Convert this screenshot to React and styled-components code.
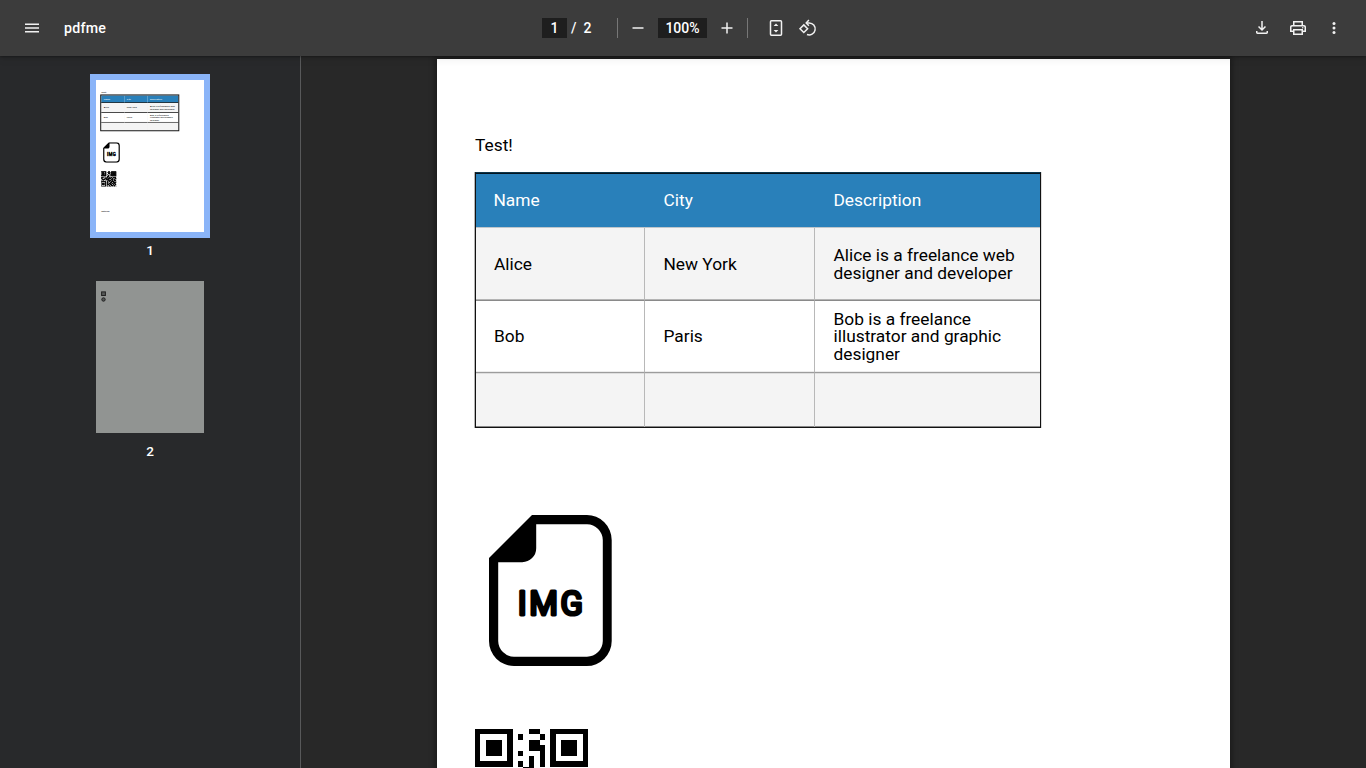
import React from "react";
import styled, { createGlobalStyle, css } from "styled-components";

const GlobalStyle = createGlobalStyle`
  * { box-sizing: border-box; }
  html, body { margin: 0; height: 100%; overflow: hidden; }
  body { font-family: Roboto, "Liberation Sans", sans-serif; background: #282828; }
  #root { height: 100vh; }
`;

const Shell = styled.div`
  display: flex;
  flex-direction: column;
  width: 100%;
  height: 100vh;
  overflow: hidden;
`;

const Toolbar = styled.header`
  flex: none;
  display: flex;
  align-items: center;
  height: 56px;
  background: #3c3c3c;
  color: #fff;
  font-size: 14px;
  font-weight: 500;
  position: relative;
  z-index: 1;
  box-shadow: 0 -2px 8px rgba(0, 0, 0, 0.09), 0 4px 8px rgba(0, 0, 0, 0.06),
    0 1px 2px rgba(0, 0, 0, 0.3);
`;

const Start = styled.div`
  display: flex;
  align-items: center;
  gap: 22px;
  width: 542px;
  padding-left: 22px;
`;

const Title = styled.span`
  font-size: 14.2px;
  letter-spacing: 0.25px;
`;

const Center = styled.div`
  display: flex;
  align-items: center;
`;

const End = styled.div`
  display: flex;
  align-items: center;
  gap: 16px;
  margin-left: auto;
  padding-right: 22px;
`;

const IconButton = styled.button`
  display: flex;
  width: 20px;
  height: 20px;
  padding: 0;
  border: 0;
  background: none;
  color: #f1f1f1;
  margin-left: ${(p) => p.$before || 0}px;
  svg { width: 20px; height: 20px; display: block; }
`;

const Field = styled.span`
  display: flex;
  align-items: center;
  justify-content: center;
  width: ${(p) => p.$width}px;
  height: 20px;
  margin-left: ${(p) => p.$before || 0}px;
  background: #1e1e1e;
`;

const Count = styled.span`
  display: flex;
  gap: 7px;
  padding-left: 4px;
  width: 50px;
`;

const Divider = styled.span`
  width: 1px;
  height: 20px;
  margin-left: ${(p) => p.$before || 0}px;
  background: #777;
`;

const Body = styled.div`
  flex: 1;
  min-height: 0;
  display: flex;
`;

const Sidebar = styled.aside`
  flex: none;
  width: 301px;
  border-right: 1px solid #58595a;
  background: #28292b;
  display: flex;
  flex-direction: column;
  align-items: center;
  gap: 13px;
  padding-top: 18px;
`;

const Thumb = styled.figure`
  margin: 0;
  display: flex;
  flex-direction: column;
  align-items: center;
  figcaption {
    height: 24px;
    line-height: 25px;
    color: #fff;
    font-size: 13.5px;
    font-weight: 500;
  }
`;

const ThumbFrame = styled.div`
  width: 120px;
  height: 164px;
  border: 6px solid ${(p) => (p.$active ? "#8ab4f8" : "transparent")};
  overflow: hidden;
`;

const Scaled = styled.div`
  width: 793px;
  height: 1122px;
  transform: scale(0.1363);
  transform-origin: 0 0;
`;

const BlankPage = styled.div`
  height: 152px;
  background: #919492;
  padding: 9.5px 4.5px;
  svg { display: block; }
`;

const Viewport = styled.main`
  flex: 1;
  overflow: hidden;
  background: #282828;
  padding: 3px 0 0 136px;
`;

const Page = styled.article`
  width: 793px;
  height: 1122px;
  padding: 78px 38px 0;
  background: #fff;
  color: #000;
  font-size: 17.33px;
  line-height: 17.6px;
  overflow: hidden;
  box-shadow: ${(p) => (p.$mini ? "none" : "0 0 6px 2px rgba(0,0,0,0.35)")};
`;

const Paragraph = styled.p`
  margin: 0;
  height: 18px;
`;

const Table = styled.div`
  display: grid;
  grid-template-columns: 169px 170px 225px;
  grid-template-rows: 55px 73px 72px 54px;
  width: 566px;
  height: 256px;
  margin-top: 17px;
  border: 1px solid #111;
  ${(p) => p.$mini
    ? css`outline: 7px solid #111;`
    : css`
        border-top-color: #0d3549;
        box-shadow: -1px 0 #b5b5b5, 1px 0 #ddd;
      `}
`;

const Cell = styled.div`
  display: flex;
  align-items: center;
  padding: ${(p) => p.$drop || 0}px 5px 0 ${(p) => (p.$first ? 18 : 18.5)}px;
  white-space: pre;
  background: ${(p) => (p.$shade ? "#f4f4f4" : "#fff")};
  border-right: ${(p) => (p.$edge ? "0" : "1px solid #b8b8b8")};
  border-bottom: ${(p) => (p.$line ? `${p.$mini ? 6 : 1}px solid ${p.$mini ? "#222" : p.$line}` : "0")};
  ${(p) => p.$soft && !p.$mini && css`box-shadow: inset 0 -1px ${p.$soft};`}
  ${(p) => p.$last && !p.$mini && css`box-shadow: inset 0 1px #dedede, inset 0 -1px #888;`}
`;

const HeadCell = styled(Cell)`
  background: #2980ba;
  color: #fff;
  border-right: 0;
  padding-left: ${(p) => (p.$first ? 17.5 : 18.5)}px;
  ${(p) => !p.$mini && css`box-shadow: inset 0 1px #03141f;`}
`;

const Picture = styled.svg`
  display: block;
  margin: 87px 0 0 14px;
`;

const Qr = styled.svg`
  display: block;
  margin: 62px 0 0 -0.4px;
`;

const Footnote = styled.p`
  margin: 168px 0 0;
  font-size: 17px;
`;

function FileImage() {
  return (
    <Picture width="124" height="152" viewBox="0 0 124 152">
      <path
        fillRule="evenodd"
        d="M0 43 43 0H97.5A25 25 0 0 1 122.7 25V126A25 25 0 0 1 97.5 151H25A25 25 0 0 1 0 126ZM9.2 47.2V126A16 16 0 0 0 25 141.7H98A16 16 0 0 0 113.8 126V25A16 16 0 0 0 98 9.2H47.2V33A14 14 0 0 1 33 47.2Z"
      />
      <text
        x="28.8"
        y="99.9"
        fontFamily="Roboto"
        fontWeight="400"
        fontSize="34"
        letterSpacing="2.6"
        textLength="67.5"
        lengthAdjust="spacingAndGlyphs"
        stroke="#000"
        strokeWidth="3.1"
        strokeLinejoin="round"
      >
        IMG
      </text>
    </Picture>
  );
}

const QR_ROWS = [
  "111111100011001111111",
  "100000101000101000001",
  "101110100011001011101",
  "101110100011101011101",
  "101110101000101011101",
  "100000100010101000001",
  "111111101010101111111",
  "000000000110000000000",
  "101101110010111010010",
  "011010001101001101101",
  "110010111011110010011",
  "001101010110001110100",
  "101100101001101001110",
  "000000001011010110101",
  "111111100101101011010",
  "100000101100011001101",
  "101110100011101111010",
  "101110101101010010110",
  "101110100110111001011",
  "100000101001001110100",
  "111111101101110101101",
];

function QrCode({ mini }) {
  return (
    <Qr
      width="113"
      height="113"
      viewBox="0 0 21 21"
      shapeRendering={mini ? "auto" : "crispEdges"}
      stroke={mini ? "#000" : "none"}
      strokeWidth="0.15"
    >
      {QR_ROWS.map((row, y) =>
        [...row].map((c, x) =>
          c === "1" ? <rect key={`${x}-${y}`} x={x} y={y} width="1" height="1" /> : null
        )
      )}
    </Qr>
  );
}

const PEOPLE = [
  {
    cells: ["Alice", "New York", "Alice is a freelance web\ndesigner and developer"],
    drops: [2, 2, 2],
    shade: true,
    line: "#8a8a8a",
    soft: "#b4b4b4",
  },
  {
    cells: ["Bob", "Paris", "Bob is a freelance\nillustrator and graphic\ndesigner"],
    drops: [0, 0, 1],
    line: "#9c9c9c",
    soft: "#ececec",
  },
  { cells: ["", "", ""], drops: [0, 0, 0], shade: true, last: true },
];

function Document({ mini }) {
  return (
    <Page $mini={mini}>
      <Paragraph>Test!</Paragraph>
      <Table $mini={mini}>
        {["Name", "City", "Description"].map((h, i) => (
          <HeadCell key={h} $mini={mini} $line="#bfc6cb" $first={i === 0} $drop={2}>
            {h}
          </HeadCell>
        ))}
        {PEOPLE.map((row, r) =>
          row.cells.map((text, i) => (
            <Cell
              key={`${r}-${i}`}
              $mini={mini}
              $shade={row.shade}
              $line={row.line}
              $soft={row.soft}
              $last={row.last}
              $drop={row.drops[i]}
              $first={i === 0}
              $edge={i === 2}
            >
              {text}
            </Cell>
          ))
        )}
      </Table>
      <FileImage />
      <QrCode mini={mini} />
      {mini && <Footnote>optional</Footnote>}
    </Page>
  );
}

const Symbol = ({ d }) => (
  <svg viewBox="0 -960 960 960" fill="currentColor"><path d={d} /></svg>
);

export default function App() {
  return (
    <Shell>
      <GlobalStyle />
      <Toolbar>
        <Start>
          <IconButton aria-label="Menu">
            <Symbol d="M144-264v-72h672v72H144Zm0-180v-72h672v72H144Zm0-180v-72h672v72H144Z" />
          </IconButton>
          <Title>pdfme</Title>
        </Start>
        <Center>
          <Field $width={25}>1</Field>
          <Count><span>/</span><span>2</span></Count>
          <Divider />
          <IconButton aria-label="Zoom out" $before={10}>
            <Symbol d="M216-444v-72h528v72H216Z" />
          </IconButton>
          <Field $width={49} $before={10}>100%</Field>
          <IconButton aria-label="Zoom in" $before={10}>
            <Symbol d="M444-444H216v-72h228v-228h72v228h228v72H516v228h-72v-228Z" />
          </IconButton>
          <Divider $before={10} />
          <IconButton aria-label="Fit to page" $before={18}>
            <svg viewBox="0 0 20 20" fill="currentColor">
              <rect x="4.5" y="2.75" width="11" height="14.5" rx="0.9" fill="none" stroke="currentColor" strokeWidth="1.5" />
              <path d="M10 5.5 12.4 8H7.6ZM10 14.5 7.6 12h4.8Z" />
            </svg>
          </IconButton>
          <IconButton aria-label="Rotate counterclockwise" $before={12}>
            <svg viewBox="0 0 20 20" fill="none" stroke="currentColor" strokeWidth="1.5">
              <path d="M5.8 6.9 9.6 10.7 5.8 14.5 2 10.7Z" />
              <path d="M8.4 4.9H11.2A6 6 0 1 1 9 16.5" />
              <path d="M10.9 2.1 8.2 4.9 10.9 7.7" />
            </svg>
          </IconButton>
        </Center>
        <End>
          <IconButton aria-label="Download">
            <Symbol d="M480-336 288-528l51-51 105 105v-342h72v342l105-105 51 51-192 192ZM263.72-192Q234-192 213-213.15T192-264v-72h72v72h432v-72h72v72q0 29.7-21.16 50.85Q725.68-192 695.96-192H263.72Z" />
          </IconButton>
          <IconButton aria-label="Print">
            <Symbol d="M648-624v-120H312v120h-72v-192h480v192h-72Zm-480 72h625-625Zm539.79 96q15.21 0 25.71-10.29t10.5-25.5q0-15.21-10.29-25.71t-25.5-10.5q-15.21 0-25.71 10.29t-10.5 25.5q0 15.21 10.29 25.71t25.5 10.5ZM648-216v-144H312v144h336Zm72 72H240v-144H96v-240q0-40 28-68t68-28h576q40 0 68 28t28 68v240H720v144Zm73-216v-153.67Q793-530 781-541t-28-11H206q-16.15 0-27.07 11.04Q168-529.92 168-513.6V-360h72v-72h480v72h73Z" />
          </IconButton>
          <IconButton aria-label="More actions">
            <svg viewBox="0 0 20 20" fill="currentColor">
              <circle cx="10" cy="5.5" r="1.5" />
              <circle cx="10" cy="10" r="1.5" />
              <circle cx="10" cy="14.5" r="1.5" />
            </svg>
          </IconButton>
        </End>
      </Toolbar>
      <Body>
        <Sidebar>
          <Thumb>
            <ThumbFrame $active>
              <Scaled><Document mini /></Scaled>
            </ThumbFrame>
            <figcaption>1</figcaption>
          </Thumb>
          <Thumb>
            <ThumbFrame>
              <BlankPage>
                <svg width="5" height="11" viewBox="0 0 5 11" fill="#555857" stroke="#222">
                  <rect x="0.6" y="0.9" width="3.8" height="3.6" />
                  <circle cx="2.5" cy="8.5" r="1.7" />
                </svg>
              </BlankPage>
            </ThumbFrame>
            <figcaption>2</figcaption>
          </Thumb>
        </Sidebar>
        <Viewport>
          <Document />
        </Viewport>
      </Body>
    </Shell>
  );
}
